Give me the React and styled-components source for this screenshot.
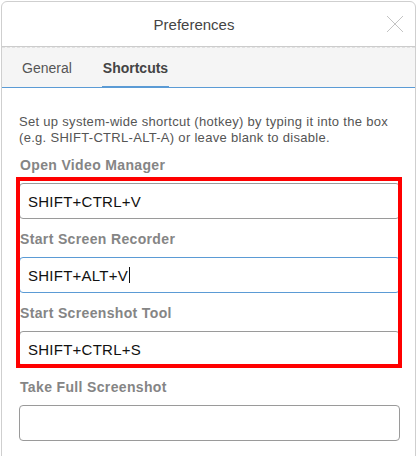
import React from "react";
import styled, { createGlobalStyle } from "styled-components";

const GlobalStyle = createGlobalStyle`
    html, body {
        margin: 0;
        padding: 0;
        background: #ffffff;
        font-family: "Liberation Sans", Arial, sans-serif;
    }
`;

const Dialog = styled.div`
    box-sizing: border-box;
    margin: 1px 0 0 1px;
    width: 415px;
    min-height: 470px;
    border: 1px solid #cfcfcf;
    border-radius: 6px 6px 0 0;
    background: #ffffff;
    overflow: hidden;
`;

const Header = styled.div`
    display: flex;
    align-items: center;
    height: 44px;
    padding-right: 11px;
    border-bottom: 1px solid #cccccc;
`;

const Title = styled.div`
    flex: 1;
    text-align: center;
    font-size: 15px;
    color: #444444;
`;

const Close = styled.button`
    width: 18px;
    height: 18px;
    padding: 0;
    border: none;
    background: none;
    display: flex;
    cursor: pointer;
`;

const TabBar = styled.div`
    display: flex;
    height: 39px;
    padding-left: 19px;
    gap: 29px;
    background: #f5f5f5;
    border-top: 1px dashed #e2e2e2;
    border-bottom: 1px solid #5b9bd5;
`;

const Tab = styled.div`
    display: flex;
    align-items: center;
    padding: 2px 1px 0;
    margin-bottom: -1px;
    font-size: 14px;
    font-weight: ${(p) => (p.active ? 700 : 400)};
    color: ${(p) => (p.active ? "#444444" : "#555555")};
    border-bottom: 2px solid ${(p) => (p.active ? "#5b9bd5" : "transparent")};
`;

const Body = styled.div`
    padding: 26px 15px 0 17px;
`;

const Hint = styled.p`
    margin: 0 -6px 10px 0;
    font-size: 13px;
    line-height: 16px;
    letter-spacing: 0.3px;
    color: #555555;
`;

const Label = styled.div`
    margin: ${(p) => (p.first ? "0" : "11px")} 0 9px 1px;
    font-size: 14px;
    line-height: 18px;
    font-weight: 700;
    letter-spacing: 0.35px;
    color: #858585;
`;

const Field = styled.div`
    box-sizing: border-box;
    display: flex;
    align-items: center;
    height: 36px;
    padding: 0 8px;
    border: 1px solid ${(p) => (p.focused ? "#5b9bd5" : "#9a9a9a")};
    border-radius: 4px;
    font-size: 15px;
    letter-spacing: 0.25px;
    color: #111111;
    background: #ffffff;
`;

const Caret = styled.span`
    display: inline-block;
    width: 1px;
    height: 16px;
    margin-left: 1px;
    background: #111111;
`;

const Highlight = styled.div`
    position: relative;
`;

const RedBox = styled.div`
    position: absolute;
    top: -6px;
    left: -3px;
    right: -2px;
    bottom: -1px;
    border: 4px solid #ff0000;
    pointer-events: none;
`;

const shortcuts = [
    { label: "Open Video Manager", value: "SHIFT+CTRL+V" },
    { label: "Start Screen Recorder", value: "SHIFT+ALT+V", focused: true },
    { label: "Start Screenshot Tool", value: "SHIFT+CTRL+S" },
    { label: "Take Full Screenshot", value: "" },
];

const CloseIcon = () => (
    <svg width="18" height="18" viewBox="0 0 18 18">
        <path d="M1 1 L17 17 M17 1 L1 17" stroke="#c4c4c4" strokeWidth="1" fill="none" />
    </svg>
);

const Shortcut = ({ item, first }) => (
    <>
        {!first && <Label>{item.label}</Label>}
        <Field focused={item.focused}>
            {item.value}
            {item.focused && <Caret />}
        </Field>
    </>
);

const App = () => {
    const [a, b, c, d] = shortcuts;
    return (
        <>
            <GlobalStyle />
            <Dialog>
                <Header>
                    <Title>Preferences</Title>
                    <Close aria-label="close"><CloseIcon /></Close>
                </Header>
                <TabBar>
                    <Tab>General</Tab>
                    <Tab active>Shortcuts</Tab>
                </TabBar>
                <Body>
                    <Hint>
                        Set up system-wide shortcut (hotkey) by typing it into the box
                        (e.g. SHIFT-CTRL-ALT-A) or leave blank to disable.
                    </Hint>
                    <Label first>{a.label}</Label>
                    <Highlight>
                        <Shortcut item={a} first />
                        <Shortcut item={b} />
                        <Shortcut item={c} />
                        <RedBox />
                    </Highlight>
                    <Shortcut item={d} />
                </Body>
            </Dialog>
        </>
    );
};

export default App;
